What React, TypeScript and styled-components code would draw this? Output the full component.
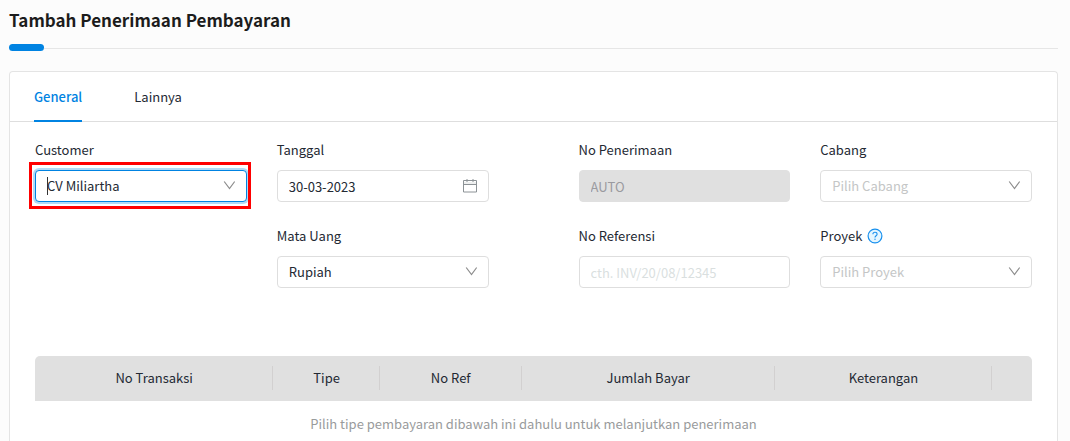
import React, { useState } from "react";
import styled, { createGlobalStyle, css } from "styled-components";

const blue = "#0083e2";
const line = "#dedede";
const ink = "#232933";

const GlobalStyle = createGlobalStyle`
  *, *::before, *::after { box-sizing: border-box; }
  body {
    margin: 0;
    background: #fcfcfc;
    color: ${ink};
    font: 13px/22px "Noto Sans CJK JP", "Noto Sans", sans-serif;
  }
  button, input, select { font: inherit; color: inherit; }
`;

const Page = styled.main`
  display: flex;
  flex-direction: column;
  min-height: 100vh;
  padding: 8px 12px 0 9px;
`;

const Title = styled.h1`
  margin: 0;
  font-size: 17px;
  line-height: 24px;
  font-weight: 700;
  color: #1c1c1c;
`;

const Divider = styled.div`
  display: flex;
  align-items: center;
  margin: 12px 0 20px;

  &::before {
    content: "";
    width: 35px;
    height: 7px;
    border-radius: 4px;
    background: ${blue};
  }
  &::after {
    content: "";
    flex: 1;
    height: 1px;
    margin-top: 2px;
    background: #e6e6e6;
  }
`;

const Card = styled.section`
  flex: 1;
  background: #fff;
  border: 1px solid #e4e4e4;
  border-bottom: 0;
  border-radius: 4px 4px 0 0;
`;

const TabBar = styled.div`
  display: flex;
  gap: 52px;
  height: 50px;
  padding: 0 24px;
  border-bottom: 1px solid ${line};
`;

const Tab = styled.button<{ $active: boolean }>`
  height: 50px;
  padding: 2px 0 0;
  border: 0;
  border-bottom: 2px solid ${(p) => (p.$active ? blue : "transparent")};
  background: none;
  color: ${(p) => (p.$active ? blue : ink)};
  font-weight: ${(p) => (p.$active ? 500 : 400)};
  cursor: pointer;
`;

const Body = styled.div`
  padding: 17px 25px 0;
`;

const Form = styled.form`
  display: grid;
  grid-template-columns: 1fr 1fr 30px 1fr 1fr;
  gap: 23px 30px;
  margin-bottom: 68px;
`;

const Field = styled.div<{ $column: number; $row: number }>`
  grid-column: ${(p) => p.$column};
  grid-row: ${(p) => p.$row};
  min-width: 0;
`;

const LabelRow = styled.div`
  display: flex;
  align-items: center;
  gap: 5px;
  height: 22px;
  margin-bottom: 9px;
`;

const Control = styled.div`
  position: relative;
`;

const box = css`
  display: block;
  width: 100%;
  height: 32px;
  padding: 0 11px;
  border: 1px solid ${line};
  border-radius: 4px;
  background: #fff;
  outline: none;
`;

const TextInput = styled.input`
  ${box}
  &::placeholder { color: #dadfdf; opacity: 1; }
  &:disabled { background: #e0e0e0; border-color: #e0e0e0; color: #9a9a9f; }
`;

const Select = styled.select<{ $empty?: boolean; $focused?: boolean }>`
  ${box}
  appearance: none;
  color: ${(p) => (p.$empty ? "#c4c6c6" : ink)};
  ${(p) =>
    p.$focused &&
    css`
      border-color: ${blue};
      box-shadow: 0 0 0 2px #b2daf6;
    `}
`;

const ControlIcon = styled.svg`
  position: absolute;
  top: 9px;
  right: 12px;
  pointer-events: none;
`;

const TextCursor = styled.span`
  position: absolute;
  top: 7px;
  left: 12px;
  width: 1px;
  height: 18px;
  background: #333;
`;

const Highlight = styled.span`
  position: absolute;
  inset: -8px -4px -7px -6px;
  border: 3px solid #ff0000;
  pointer-events: none;
`;

const HelpButton = styled.button`
  display: flex;
  padding: 0;
  border: 0;
  background: none;
  cursor: help;
`;

const Table = styled.table`
  width: 100%;
  table-layout: fixed;
  border-collapse: separate;
  border-spacing: 0;
`;

const HeadCell = styled.th<{ $share: number }>`
  position: relative;
  width: ${(p) => p.$share}%;
  height: 45px;
  padding: 0 0 2px;
  background: #e0e0e0;
  font-weight: 400;
  text-align: center;

  &:first-child { border-top-left-radius: 5px; }
  &:last-child { border-top-right-radius: 5px; }
  &:not(:last-child)::after {
    content: "";
    position: absolute;
    top: 10px;
    right: 0;
    width: 1px;
    height: 24px;
    background: #d2d0d0;
  }
`;

const EmptyCell = styled.td`
  padding: 12px 0 0;
  color: #999b9c;
  text-align: center;
`;

const Chevron = () => (
  <ControlIcon width="12" height="12" viewBox="0 0 12 12" fill="none" stroke="#8c8c8c" aria-hidden="true">
    <path d="M1.200 2.500 6.500 9.500l5.200-7" strokeWidth="1.200" />
  </ControlIcon>
);

const Calendar = () => (
  <ControlIcon width="14" height="14" viewBox="0 0 14 14" fill="none" stroke="#8c9296" aria-hidden="true">
    <path d="M1 4h12" stroke="#dde0e0" />
    <path d="M.5 1.500h13v11.500H.5zM.5 5.500h13M4 0v3M10 0v3" />
  </ControlIcon>
);

const Help = () => (
  <svg width="16" height="16" viewBox="0 0 16 16" fill="none" aria-hidden="true">
    <circle cx="8" cy="8" r="6.900" fill="#e4f6ff" stroke="#1890ee" strokeWidth="1.200" />
    <path d="M5.900 6.300c0-1.200.9-2 2.100-2s2.100.8 2.100 1.900c0 1.500-2.100 1.600-2.100 3.200" stroke="#1890ee" strokeWidth="1.100" />
    <circle cx="8" cy="11.200" r=".7" fill="#1890ee" />
  </svg>
);

const columns = [
  { name: "No Transaksi", share: 23.9 },
  { name: "Tipe", share: 10.7 },
  { name: "No Ref", share: 14.2 },
  { name: "Jumlah Bayar", share: 25.4 },
  { name: "Keterangan", share: 21.8 },
  { name: "", share: 4 },
];

const tabs = ["General", "Lainnya"];

interface FieldProps {
  id: string;
  label: string;
  column: number;
  row: number;
  help?: boolean;
  children: React.ReactNode;
}

const FormField = ({ id, label, column, row, help, children }: FieldProps) => (
  <Field $column={column} $row={row}>
    <LabelRow>
      <label htmlFor={id}>{label}</label>
      {help && (
        <HelpButton type="button" aria-label="Bantuan proyek">
          <Help />
        </HelpButton>
      )}
    </LabelRow>
    <Control>{children}</Control>
  </Field>
);

export default function App() {
  const [tab, setTab] = useState("General");

  return (
    <>
      <GlobalStyle />
      <Page>
        <Title>Tambah Penerimaan Pembayaran</Title>
        <Divider />
        <Card>
          <TabBar role="tablist">
            {tabs.map((name) => (
              <Tab key={name} type="button" role="tab" aria-selected={tab === name} $active={tab === name} onClick={() => setTab(name)}>
                {name}
              </Tab>
            ))}
          </TabBar>
          <Body>
            <Form>
              <FormField id="customer" label="Customer" column={1} row={1}>
                <Select id="customer" $focused>
                  <option>CV Miliartha</option>
                </Select>
                <TextCursor />
                <Chevron />
                <Highlight />
              </FormField>
              <FormField id="date" label="Tanggal" column={2} row={1}>
                <TextInput id="date" defaultValue="30-03-2023" />
                <Calendar />
              </FormField>
              <FormField id="receipt" label="No Penerimaan" column={4} row={1}>
                <TextInput id="receipt" value="AUTO" disabled />
              </FormField>
              <FormField id="branch" label="Cabang" column={5} row={1}>
                <Select id="branch" $empty>
                  <option>Pilih Cabang</option>
                </Select>
                <Chevron />
              </FormField>
              <FormField id="currency" label="Mata Uang" column={2} row={2}>
                <Select id="currency">
                  <option>Rupiah</option>
                </Select>
                <Chevron />
              </FormField>
              <FormField id="reference" label="No Referensi" column={4} row={2}>
                <TextInput id="reference" placeholder="cth. INV/20/08/12345" />
              </FormField>
              <FormField id="project" label="Proyek" column={5} row={2} help>
                <Select id="project" $empty>
                  <option>Pilih Proyek</option>
                </Select>
                <Chevron />
              </FormField>
            </Form>
            <Table>
              <thead>
                <tr>
                  {columns.map((c) => (
                    <HeadCell key={c.name} scope="col" $share={c.share}>
                      {c.name}
                    </HeadCell>
                  ))}
                </tr>
              </thead>
              <tbody>
                <tr>
                  <EmptyCell colSpan={columns.length}>
                    Pilih tipe pembayaran dibawah ini dahulu untuk melanjutkan penerimaan
                  </EmptyCell>
                </tr>
              </tbody>
            </Table>
          </Body>
        </Card>
      </Page>
    </>
  );
}
